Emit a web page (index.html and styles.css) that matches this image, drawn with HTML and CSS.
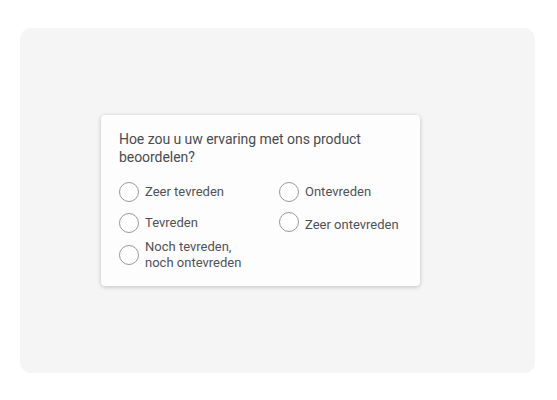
FILE: index.html
```html
<!DOCTYPE html>
<html lang="nl">
<head>
<meta charset="utf-8">
<link rel="stylesheet" href="styles.css">
</head>
<body>
<div class="panel">
  <div class="card">
    <p class="question">Hoe zou u uw ervaring met ons product beoordelen?</p>
    <div class="options">
      <div class="col first">
        <label class="opt"><span class="radio"></span><span class="lbl">Zeer tevreden</span></label>
        <label class="opt"><span class="radio"></span><span class="lbl">Tevreden</span></label>
        <label class="opt two-line"><span class="radio"></span><span class="lbl">Noch tevreden,<br>noch ontevreden</span></label>
      </div>
      <div class="col second">
        <label class="opt"><span class="radio"></span><span class="lbl">Ontevreden</span></label>
        <label class="opt"><span class="radio"></span><span class="lbl lower">Zeer ontevreden</span></label>
      </div>
    </div>
  </div>
</div>
</body>
</html>
```
FILE: styles.css
```css
html, body {
  margin: 0;
  padding: 0;
  background: #ffffff;
}
body {
  font-family: Roboto, "Noto Sans", sans-serif;
  color: #4d4f52;
}
.panel {
  margin: 28px 22px 0 20px;
  height: 345px;
  background: #f5f5f5;
  border-radius: 11px;
  display: flex;
  align-items: flex-start;
  padding: 87px 0 0 81px;
  box-sizing: border-box;
}
.card {
  width: 319px;
  box-sizing: border-box;
  background: #fdfdfd;
  border-radius: 4px;
  box-shadow: 0 1px 4px rgba(0, 0, 0, 0.22);
  padding: 15px 18px 15px 18px;
}
.question {
  margin: 0;
  font-size: 14px;
  line-height: 18px;
  letter-spacing: -0.05px;
  color: #4a4c50;
}
.options {
  display: flex;
  margin-top: 16px;
}
.col {
  display: flex;
  flex-direction: column;
}
.col.first {
  width: 160px;
  flex: none;
  gap: 11px;
}
.col.first .two-line {
  margin-top: -5px;
}
.col.second {
  flex: 1;
  gap: 9px;
}
.opt {
  display: flex;
  align-items: center;
  font-size: 13px;
  line-height: 16px;
  white-space: nowrap;
  color: #505256;
}
.radio {
  width: 18px;
  height: 18px;
  border: 1px solid #9a9a9a;
  border-radius: 50%;
  background: #fff;
  flex: none;
  margin-right: 6px;
}
.lbl.lower {
  padding-top: 6px;
}
```
